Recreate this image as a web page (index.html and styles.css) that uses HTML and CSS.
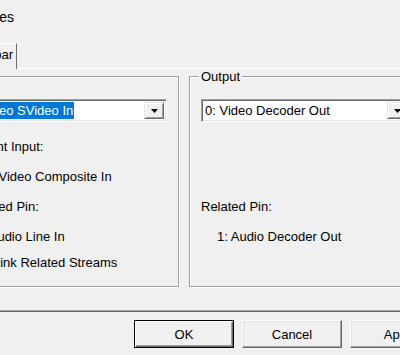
FILE: index.html
```html
<!DOCTYPE html>
<html lang="en">
<head>
    <meta charset="UTF-8">
    <title>Crossbar Properties</title>
    <link rel="stylesheet" href="styles.css">
</head>
<body>
    <div class="caption"><span>Crossbar Properties</span></div>
    <div class="tabs">
        <div class="tab">Crossbar</div>
    </div>
    <div class="page">
        <fieldset class="group group-input">
            <legend>Input</legend>
            <div class="combo combo-input">
                <div class="combo-text"><span class="selected">1: Video SVideo In</span></div>
                <div class="drop"><svg width="7" height="4" viewBox="0 0 7 4"><path d="M0 0h7L3.5 4z"/></svg></div>
            </div>
            <div class="row first">Current Input:</div>
            <div class="row value">0: Video Composite In</div>
            <div class="row">Related Pin:</div>
            <div class="row value audio">2: Audio Line In</div>
            <label class="row check"><span class="box"></span>Link Related Streams</label>
        </fieldset>
        <fieldset class="group group-output">
            <legend>Output</legend>
            <div class="combo">
                <div class="combo-text">0: Video Decoder Out</div>
                <div class="drop"><svg width="7" height="4" viewBox="0 0 7 4"><path d="M0 0h7L3.5 4z"/></svg></div>
            </div>
            <div class="row related">Related Pin:</div>
            <div class="row value">1: Audio Decoder Out</div>
        </fieldset>
    </div>
    <div class="buttons">
        <button class="btn default">OK</button>
        <button class="btn">Cancel</button>
        <button class="btn">Apply</button>
    </div>
</body>
</html>
```

FILE: styles.css
```css
* {
    margin: 0;
    padding: 0;
    box-sizing: border-box;
}
body {
    width: 400px;
    height: 355px;
    overflow: hidden;
    background: #f0f0f0;
    color: #000;
    font-family: "Liberation Sans", Arial, sans-serif;
    font-size: 13px;
}
.caption {
    display: flex;
    justify-content: flex-end;
    width: 14px;
    height: 34px;
    line-height: 34px;
    font-size: 14px;
    white-space: nowrap;
}
.tabs {
    display: flex;
    justify-content: flex-end;
    width: 17px;
    margin-top: 9px;
}
.tab {
    position: relative;
    height: 26px;
    margin-bottom: -1px;
    padding: 0 3px 0 6px;
    line-height: 22px;
    background: #f0f0f0;
    border-top: 1px solid #fff;
    border-left: 1px solid #fff;
    border-right: 1px solid #6d6d6d;
    white-space: nowrap;
}
.page {
    display: flex;
    gap: 10px;
    width: 530px;
    height: 244px;
    margin-left: -60px;
    padding-left: 16px;
    border-top: 1px solid #fff;
    border-bottom: 1px solid #696969;
    box-shadow: inset 0 -1px #a0a0a0;
}
.group {
    flex: none;
    height: 218px;
    min-width: 0;
    padding: 0 11px;
    border: 1px solid #a0a0a0;
    box-shadow: 1px 1px #fff, inset 1px 1px #fff;
}
.group-input {
    width: 223px;
}
.group-output {
    width: 233px;
}
.group legend {
    margin-left: -2px;
    padding: 0 2px;
    line-height: 15px;
    background: #f0f0f0;
}
.combo {
    display: flex;
    height: 23px;
    margin-top: 15px;
    padding: 2px;
    background: #fff;
    border: 1px solid;
    border-color: #a0a0a0 #fff #fff #a0a0a0;
    box-shadow: inset 1px 1px #696969, inset -1px -1px #e3e3e3;
}
.combo-input {
    margin-left: -7px;
}
.combo-text {
    flex: 1;
    padding-left: 1px;
    line-height: 17px;
    white-space: nowrap;
    overflow: hidden;
}
.selected {
    display: inline-block;
    padding: 0 1px;
    background: #0078d7;
    color: #fff;
}
.drop {
    display: flex;
    align-items: center;
    justify-content: center;
    width: 20px;
    height: 17px;
    background: #f0f0f0;
    border: 1px solid;
    border-color: #e3e3e3 #696969 #696969 #e3e3e3;
    box-shadow: inset 1px 1px #fff, inset -1px -1px #a0a0a0;
}
.row {
    margin-top: 14px;
    line-height: 16px;
    white-space: nowrap;
}
.row.first {
    margin-top: 17px;
    margin-left: -4px;
}
.row.related {
    margin-top: 77px;
}
.value {
    padding-left: 16px;
}
.value.audio {
    margin-left: -9px;
}
.check {
    display: flex;
    align-items: center;
    gap: 6px;
    margin-top: 10px;
    padding-left: 6px;
}
.check .box {
    width: 13px;
    height: 13px;
    background: #fff;
    border: 1px solid #333;
}
.buttons {
    display: flex;
    gap: 8px;
    margin-top: 8px;
    padding-left: 134px;
}
.btn {
    flex: none;
    width: 100px;
    height: 28px;
    font-family: inherit;
    font-size: 13px;
    color: #000;
    background: #f0f0f0;
    border: 1px solid;
    border-color: #fff #696969 #696969 #fff;
    box-shadow: inset -1px -1px #a0a0a0, inset 1px 1px #e3e3e3;
}
.btn.default {
    border-color: #000;
    box-shadow: inset 1px 1px #fff, inset -1px -1px #696969, inset -2px -2px #a0a0a0;
}
```
